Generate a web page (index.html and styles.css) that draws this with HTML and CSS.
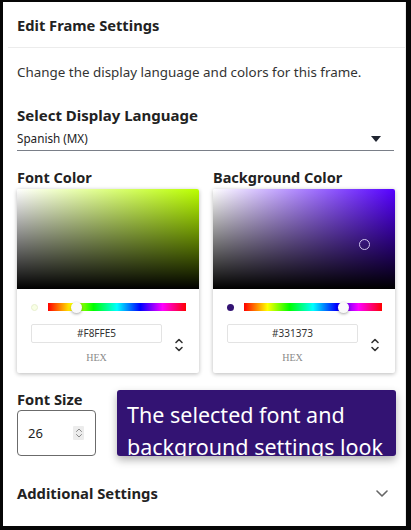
FILE: index.html
```html
<!DOCTYPE html>
<html lang="en">
<head>
<meta charset="utf-8">
<title>Edit Frame Settings</title>
<link rel="stylesheet" href="styles.css">
</head>
<body>
<div class="frame">
  <div class="panel">
    <div class="header"><h1 class="title">Edit Frame Settings</h1></div>
    <div class="content">
      <p class="desc">Change the display language and colors for this frame.</p>
      <h2 class="lang-label">Select Display Language</h2>
      <div class="select">
        <span class="select-value">Spanish (MX)</span>
        <svg class="caret" width="10" height="6" viewBox="0 0 10 6"><path d="M0 0 H10 L5 6 Z" fill="#1f2430"/></svg>
      </div>

      <div class="pickers">
        <div class="picker">
          <div class="picker-label">Font Color</div>
          <div class="card">
            <div class="sv sv-font"></div>
            <div class="controls">
              <div class="hue-row">
                <span class="swatch swatch-font"></span>
                <div class="hue"><span class="thumb" style="left:21%"></span></div>
              </div>
              <div class="hex-row">
                <div class="hex-col">
                  <div class="hex-input">#F8FFE5</div>
                  <div class="hex-label">HEX</div>
                </div>
                <svg class="toggle" width="10" height="16" viewBox="0 0 10 16"><path d="M2 5.5 L5 2.5 L8 5.5 M2 10.5 L5 13.5 L8 10.5" fill="none" stroke="#333" stroke-width="1.6" stroke-linecap="round" stroke-linejoin="round"/></svg>
              </div>
            </div>
          </div>
        </div>
        <div class="picker">
          <div class="picker-label">Background Color</div>
          <div class="card">
            <div class="sv sv-bg"><span class="sv-marker" style="left:83%;top:55%"></span></div>
            <div class="controls">
              <div class="hue-row">
                <span class="swatch swatch-bg"></span>
                <div class="hue"><span class="thumb" style="left:72.2%"></span></div>
              </div>
              <div class="hex-row">
                <div class="hex-col">
                  <div class="hex-input">#331373</div>
                  <div class="hex-label">HEX</div>
                </div>
                <svg class="toggle" width="10" height="16" viewBox="0 0 10 16"><path d="M2 5.5 L5 2.5 L8 5.5 M2 10.5 L5 13.5 L8 10.5" fill="none" stroke="#333" stroke-width="1.6" stroke-linecap="round" stroke-linejoin="round"/></svg>
              </div>
            </div>
          </div>
        </div>
      </div>

      <div class="size-block">
        <div class="size-label">Font Size</div>
        <div class="size-input">
          <span class="size-value">26</span>
          <span class="spin">
            <svg width="8" height="12" viewBox="0 0 8 12"><path d="M1.5 4.5 L4 2 L6.5 4.5 M1.5 7.5 L4 10 L6.5 7.5" fill="none" stroke="#8a8a8a" stroke-width="1" stroke-linecap="round" stroke-linejoin="round"/></svg>
          </span>
        </div>
        <div class="preview-tip">The selected font and background settings look</div>
      </div>

      <div class="additional">
        <span class="additional-label">Additional Settings</span>
        <svg class="chev" width="12" height="7" viewBox="0 0 12 7"><path d="M1 1 L6 6 L11 1" fill="none" stroke="#666" stroke-width="1.6" stroke-linecap="round" stroke-linejoin="round"/></svg>
      </div>
    </div>
  </div>
</div>
</body>
</html>
```

FILE: styles.css
```css
html, body {
  margin: 0;
  padding: 0;
  background: #060606;
}
body {
  width: 411px;
  height: 530px;
  overflow: hidden;
  font-family: "Noto Sans", "Open Sans", sans-serif;
  color: #222;
}
.frame {
  padding: 2px 5px 4px 3px;
}
.panel {
  height: 524px;
  background: #fff;
  border-right: 1px solid #ececec;
  box-sizing: border-box;
  overflow: hidden;
}
.header {
  height: 45px;
  border-bottom: 1px solid #ececec;
  margin-left: 5px;
  padding-left: 9px;
  display: flex;
  align-items: center;
}
.title {
  margin: 0;
  font-size: 14.7px;
  font-weight: 700;
  color: #222;
  line-height: 20px;
}
.content {
  padding: 0 10px 0 14px;
}
.desc {
  margin: 14px 0 0;
  font-size: 13.4px;
  line-height: 20px;
  color: #333;
}
.lang-label {
  margin: 22px 0 0;
  font-size: 15px;
  line-height: 22px;
  font-weight: 700;
  color: #222;
}
.select {
  margin-right: 1px;
  height: 22px;
  padding: 2px 0 0;
  box-sizing: content-box;
  border-bottom: 1px solid #7a7f88;
  display: flex;
  align-items: flex-start;
  justify-content: space-between;
}
.select-value {
  font-size: 11.7px;
  line-height: 20px;
  color: #222;
}
.caret {
  margin: 8px 13px 0 0;
}
.pickers {
  margin-top: 16px;
  display: grid;
  grid-template-columns: 1fr 1fr;
  column-gap: 14px;
}
.picker-label {
  font-size: 14.5px;
  line-height: 20px;
  font-weight: 700;
  color: #222;
  margin-bottom: 2px;
}
.card {
  background: #fff;
  border-radius: 2px;
  box-shadow: 0 1px 4px rgba(0, 0, 0, 0.28);
  overflow: hidden;
}
.sv {
  height: 100px;
  position: relative;
}
.sv-font {
  background: linear-gradient(to top, #000, rgba(0, 0, 0, 0)),
              linear-gradient(to right, #fff, hsl(76, 100%, 50%));
}
.sv-bg {
  background: linear-gradient(to top, #000, rgba(0, 0, 0, 0)),
              linear-gradient(to right, #fff, hsl(260, 100%, 50%));
}
.sv-marker {
  position: absolute;
  width: 9px;
  height: 9px;
  margin: -5px 0 0 -5px;
  border: 1px solid #cfc4ee;
  border-radius: 50%;
}
.controls {
  padding: 14px 13px 8px 14px;
}
.hue-row {
  display: flex;
  align-items: center;
  height: 8px;
}
.swatch {
  width: 7px;
  height: 7px;
  border-radius: 50%;
  box-sizing: border-box;
  margin-right: 10px;
  flex: none;
}
.swatch-font {
  background: #f8ffe5;
  border: 1px solid #e8efcf;
}
.swatch-bg {
  background: #331373;
}
.hue {
  flex: 1;
  height: 8px;
  position: relative;
  background: linear-gradient(to right, #f00 0%, #ff0 17%, #0f0 33%, #0ff 50%, #00f 67%, #f0f 83%, #f00 100%);
}
.thumb {
  position: absolute;
  top: 50%;
  width: 11px;
  height: 11px;
  margin: -5.5px 0 0 -5.5px;
  border-radius: 50%;
  background: #fafafa;
  box-shadow: 0 1px 3px rgba(0, 0, 0, 0.35);
}
.hex-row {
  margin-top: 13px;
  display: flex;
  align-items: flex-start;
}
.hex-col {
  width: 131px;
  flex: none;
}
.hex-input {
  height: 19px;
  box-sizing: border-box;
  border: 1px solid #e3e3e3;
  border-radius: 2px;
  font-size: 10px;
  line-height: 17px;
  text-align: center;
  color: #333;
}
.hex-label {
  margin-top: 8px;
  font-family: "Liberation Serif", "DejaVu Serif", serif;
  font-size: 10px;
  line-height: 14px;
  text-align: center;
  color: #8a8a8a;
}
.toggle {
  margin: 13px 0 0 12px;
  flex: none;
}
.size-block {
  position: relative;
  margin-top: 17px;
}
.size-label {
  font-size: 14.7px;
  line-height: 18px;
  font-weight: 700;
  color: #222;
}
.size-input {
  margin-top: 2px;
  width: 79px;
  height: 46px;
  box-sizing: border-box;
  border: 1px solid #6b6b6b;
  border-radius: 4px;
  padding: 0 11px 0 10px;
  display: flex;
  align-items: center;
  justify-content: space-between;
}
.size-value {
  font-size: 13px;
  color: #222;
}
.spin {
  width: 11px;
  height: 14px;
  background: #ececec;
  border-radius: 1px;
  display: flex;
  align-items: center;
  justify-content: center;
}
.preview-tip {
  position: absolute;
  left: 100px;
  top: 0;
  width: 279px;
  height: 66px;
  box-sizing: border-box;
  padding: 9px 6px 0 10px;
  background: #331373;
  color: #fff;
  border-radius: 3px;
  box-shadow: 0 4px 8px rgba(0, 0, 0, 0.3);
  font-size: 21.5px;
  line-height: 32px;
  overflow: hidden;
}
.additional {
  margin-top: 27px;
  display: flex;
  align-items: center;
  justify-content: space-between;
}
.additional-label {
  font-size: 14.8px;
  line-height: 20px;
  font-weight: 700;
  color: #222;
}
.chev {
  margin-right: 7px;
}
```
